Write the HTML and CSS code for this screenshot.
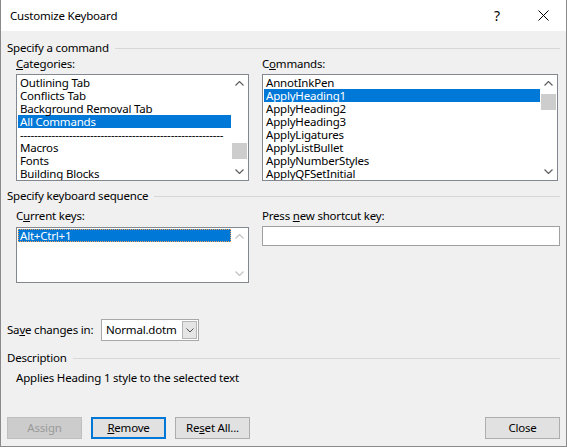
FILE: index.html
```html
<!DOCTYPE html>
<html>
<head>
<meta charset="utf-8">
<link rel="stylesheet" href="styles.css">
</head>
<body>
<div class="window">
  <div class="titlebar">
    <span class="title">Customize Keyboard</span>
    <span class="tbtn help">?</span>
    <span class="tbtn close"><svg width="11" height="11" viewBox="0 0 11 11"><path d="M0.5 0.5 L10.5 10.5 M10.5 0.5 L0.5 10.5" stroke="#000" stroke-width="1" fill="none"/></svg></span>
  </div>
  <div class="body">
    <div class="group-h g1"><span>Specify a command</span><span class="rule"></span></div>
    <div class="cols">
      <div class="col">
        <div class="label"><u>C</u>ategories:</div>
        <div class="listbox tall">
          <div class="items">
            <div class="item">Outlining Tab</div>
            <div class="item">Conflicts Tab</div>
            <div class="item">Background Removal Tab</div>
            <div class="item sel">All Commands</div>
            <div class="item">----------------------------------------------------------</div>
            <div class="item">Macros</div>
            <div class="item">Fonts</div>
            <div class="item">Building Blocks</div>
          </div>
          <div class="sbar">
            <div class="arrow"><svg width="9" height="5" viewBox="0 0 9 5"><path d="M0.5 4.5 L4.5 0.5 L8.5 4.5" fill="none" stroke="#606060" stroke-width="1.2"/></svg></div>
            <div class="track"><div class="thumb t-cat"></div></div>
            <div class="arrow"><svg width="9" height="5" viewBox="0 0 9 5"><path d="M0.5 0.5 L4.5 4.5 L8.5 0.5" fill="none" stroke="#606060" stroke-width="1.2"/></svg></div>
          </div>
        </div>
      </div>
      <div class="col">
        <div class="label">C<u>o</u>mmands:</div>
        <div class="listbox tall narrow">
          <div class="items">
            <div class="item">AnnotInkPen</div>
            <div class="item sel">ApplyHeading1</div>
            <div class="item">ApplyHeading2</div>
            <div class="item">ApplyHeading3</div>
            <div class="item">ApplyLigatures</div>
            <div class="item">ApplyListBullet</div>
            <div class="item">ApplyNumberStyles</div>
            <div class="item">ApplyQFSetInitial</div>
          </div>
          <div class="sbar">
            <div class="arrow"><svg width="9" height="5" viewBox="0 0 9 5"><path d="M0.5 4.5 L4.5 0.5 L8.5 4.5" fill="none" stroke="#606060" stroke-width="1.2"/></svg></div>
            <div class="track"><div class="thumb t-cmd"></div></div>
            <div class="arrow"><svg width="9" height="5" viewBox="0 0 9 5"><path d="M0.5 0.5 L4.5 4.5 L8.5 0.5" fill="none" stroke="#606060" stroke-width="1.2"/></svg></div>
          </div>
        </div>
      </div>
    </div>

    <div class="group-h g2"><span>Specify keyboard sequence</span><span class="rule"></span></div>
    <div class="cols cols2">
      <div class="col">
        <div class="label">C<u>u</u>rrent keys:</div>
        <div class="listbox short">
          <div class="items">
            <div class="item sel focus">Alt+Ctrl+1</div>
          </div>
          <div class="sbar">
            <div class="arrow"><svg width="9" height="5" viewBox="0 0 9 5"><path d="M0.5 4.5 L4.5 0.5 L8.5 4.5" fill="none" stroke="#c2c2c2" stroke-width="1.2"/></svg></div>
            <div class="track"></div>
            <div class="arrow"><svg width="9" height="5" viewBox="0 0 9 5"><path d="M0.5 0.5 L4.5 4.5 L8.5 0.5" fill="none" stroke="#c2c2c2" stroke-width="1.2"/></svg></div>
          </div>
        </div>
      </div>
      <div class="col">
        <div class="label">Press <u>n</u>ew shortcut key:</div>
        <div class="textbox"></div>
      </div>
    </div>

    <div class="save-row">
      <span class="save-label">Sa<u>v</u>e changes in:</span>
      <div class="combo">
        <span class="combo-text">Normal.dotm</span>
        <span class="combo-btn"><svg width="8" height="5" viewBox="0 0 8 5"><path d="M0.5 0.5 L4 4 L7.5 0.5" fill="none" stroke="#505050" stroke-width="1"/></svg></span>
      </div>
    </div>

    <div class="group-h g3"><span>Description</span><span class="rule"></span></div>
    <div class="desc">Applies Heading 1 style to the selected text</div>

    <div class="buttons">
      <button class="btn disabled">Assign</button>
      <button class="btn default"><u>R</u>emove</button>
      <button class="btn">Re<u>s</u>et All...</button>
      <span class="spacer"></span>
      <button class="btn">Close</button>
    </div>
  </div>
</div>
</body>
</html>
```

FILE: styles.css
```css
* { box-sizing: border-box; }
html, body { margin: 0; padding: 0; }
body {
  width: 567px;
  height: 448px;
  background: #ffffff;
  font-family: "Noto Sans", "Segoe UI", sans-serif;
  font-size: 11.5px;
  letter-spacing: -0.2px;
  color: #000;
  overflow: hidden;
}
u { text-decoration: underline; text-underline-offset: 1px; }

.window {
  width: 567px;
  height: 447px;
  background: #f0f0f0;
  border: 1px solid #8a8a8a;
  border-top: none;
  display: flex;
  flex-direction: column;
}

.titlebar {
  height: 31px;
  flex-shrink: 0;
  background: #fff;
  display: flex;
  align-items: center;
}
.title {
  flex: 1;
  padding-left: 9px;
  line-height: 16px;
}
.tbtn {
  width: 46px;
  height: 31px;
  display: flex;
  align-items: center;
  justify-content: center;
}
.help { font-size: 14px; }

.body {
  flex: 1;
  padding: 0 6px;
  display: flex;
  flex-direction: column;
}

.group-h {
  display: flex;
  align-items: center;
  height: 16px;
  line-height: 16px;
}
.group-h .rule {
  flex: 1;
  height: 1px;
  background: #d7d7d7;
  margin-left: 6px;
}
.g1 { margin-top: 9px; }
.g2 { margin-top: 7px; }
.g3 { margin-top: 9px; }

.cols {
  display: grid;
  grid-template-columns: 233px 298px;
  column-gap: 13px;
  margin-left: 9px;
}
.cols2 { margin-top: 4px; }
.label { height: 16px; line-height: 16px; white-space: nowrap; }

.listbox {
  background: #fff;
  border: 1px solid #828790;
  display: flex;
}
.listbox.tall { height: 107px; margin-top: 2px; }
.listbox.narrow { width: 296px; }
.listbox.short { height: 56px; margin-top: 3px; }

.items {
  flex: 1;
  padding: 1px 0 0 1px;
  overflow: hidden;
}
.item {
  height: 13px;
  line-height: 13px;
  padding-left: 2px;
  white-space: nowrap;
}
.item.sel { background: #0078d7; color: #fff; }
.item.focus { outline: 1px dotted #f0a050; outline-offset: -1px; }

.sbar {
  width: 17px;
  display: flex;
  flex-direction: column;
  background: #fff;
}
.arrow {
  height: 17px;
  display: flex;
  align-items: center;
  justify-content: center;
}
.track { flex: 1; }
.thumb {
  height: 16px;
  margin: 0 1px;
  background: #cdcdcd;
}
.t-cat { margin-top: 51px; }
.t-cmd { margin-top: 2px; }

.textbox {
  margin-top: 2px;
  height: 20px;
  background: #fff;
  border: 1px solid #a0a0a0;
}

.save-row {
  margin-top: 36px;
  display: flex;
  align-items: center;
  height: 22px;
}
.save-label { width: 94px; line-height: 16px; white-space: nowrap; }
.combo {
  width: 98px;
  height: 22px;
  background: #fff;
  border: 1px solid #a8a8a8;
  display: flex;
  align-items: center;
  padding: 0 1px 0 4px;
}
.combo-text { flex: 1; line-height: 16px; }
.combo-btn {
  width: 15px;
  height: 18px;
  background: #e5e5e5;
  border: 1px solid #b5b5b5;
  display: flex;
  align-items: center;
  justify-content: center;
}

.desc {
  margin-top: 4px;
  padding-left: 9px;
  height: 16px;
  line-height: 16px;
}

.buttons {
  margin-top: 31px;
  display: flex;
  gap: 9px;
  height: 22px;
}
.spacer { flex: 1; }
.btn {
  width: 75px;
  height: 22px;
  padding: 0;
  font-family: inherit;
  font-size: 11.5px;
  letter-spacing: -0.2px;
  color: #000;
  background: #e1e1e1;
  border: 1px solid #adadad;
  line-height: 16px;
}
.btn.default { border: 2px solid #0078d7; }
.btn.disabled { background: #cccccc; border-color: #bfbfbf; color: #9a9a9a; }
```
